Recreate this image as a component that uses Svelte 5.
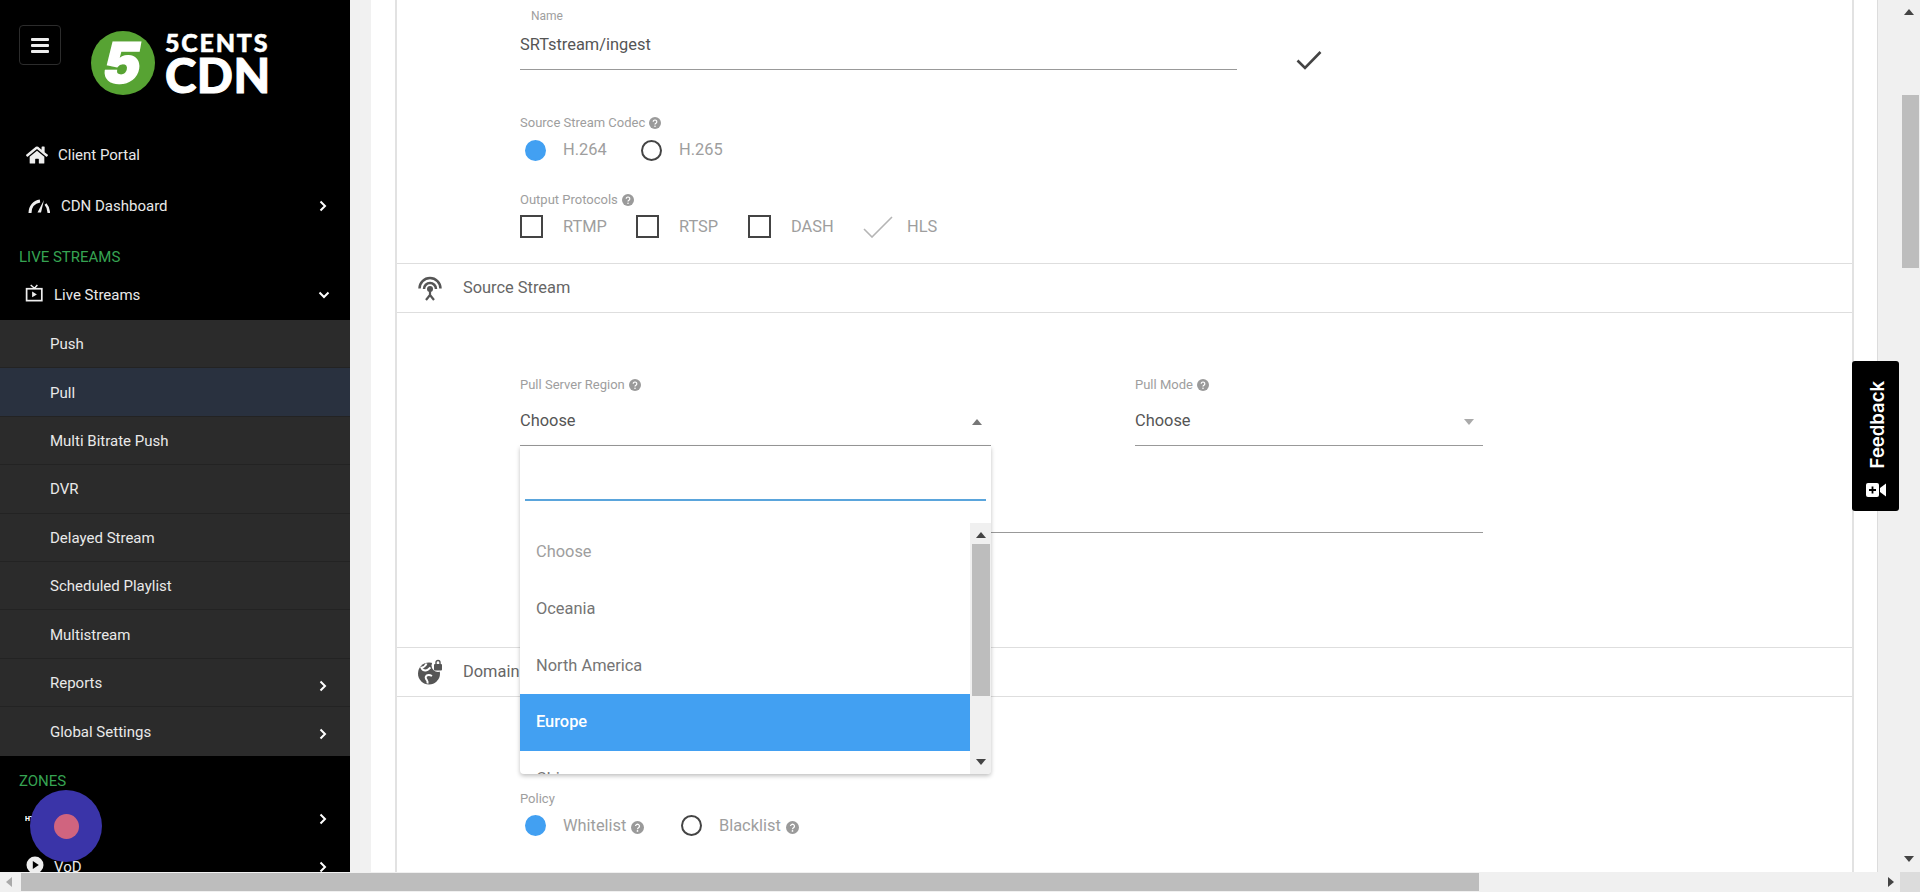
<script>
  const subItems = [
    { label: 'Push' },
    { label: 'Pull', active: true },
    { label: 'Multi Bitrate Push' },
    { label: 'DVR' },
    { label: 'Delayed Stream' },
    { label: 'Scheduled Playlist' },
    { label: 'Multistream' },
    { label: 'Reports', more: true },
    { label: 'Global Settings', more: true }
  ];

  const regions = ['Choose', 'Oceania', 'North America', 'Europe', 'China'];
  const protocols = [
    { label: 'RTMP', width: 116 },
    { label: 'RTSP', width: 112 },
    { label: 'DASH', width: 115 }
  ];
</script>

{#snippet help()}
  <svg class="help" viewBox="0 0 12 12" aria-hidden="true">
    <circle cx="6" cy="6" r="6" fill="#9a9a9a" />
    <path d="M4.2 4.7a1.8 1.7 0 1 1 2.7 1.5c-.6.4-.9.6-.9 1.3" fill="none" stroke="#fff" stroke-width="1.2" />
    <circle cx="6" cy="9.2" r=".8" fill="#fff" />
  </svg>
{/snippet}

{#snippet chevron(down = false)}
  <svg class="chevron" class:down viewBox="0 0 8 12" aria-hidden="true">
    <path d="M1.5 1.5 6 6l-4.500 4.500" fill="none" stroke="#fff" stroke-width="2" />
  </svg>
{/snippet}

<div class="page">
  <div class="top">
    <aside class="sidebar">
      <div class="brand">
        <button class="burger" aria-label="Menu">
          <span></span><span></span><span></span>
        </button>
        <div class="logo">
          <div class="logo-mark"><span>5</span></div>
          <div class="logo-text">
            <span class="logo-small">5CENTS</span>
            <span class="logo-big">CDN</span>
          </div>
        </div>
      </div>

      <nav>
        <div class="nav-row portal">
          <svg class="nav-icon" viewBox="0 0 576 512" aria-hidden="true">
            <path fill="#eee" d="M280.37 148.26L96 300.11V464a16 16 0 0 0 16 16l112.06-.29a16 16 0 0 0 15.92-16V368a16 16 0 0 1 16-16h64a16 16 0 0 1 16 16v95.64a16 16 0 0 0 16 16.05L464 480a16 16 0 0 0 16-16V300L295.67 148.26a12.19 12.19 0 0 0-15.3 0zM571.6 251.47L488 182.56V44.05a12 12 0 0 0-12-12h-56a12 12 0 0 0-12 12v72.61L318.47 43a48 48 0 0 0-61 0L4.34 251.47a12 12 0 0 0-1.6 16.9l25.5 31A12 12 0 0 0 45.15 301l235.22-193.74a12.19 12.19 0 0 1 15.3 0L530.9 301a12 12 0 0 0 16.9-1.6l25.5-31a12 12 0 0 0-1.7-17z" />
          </svg>
          <span>Client Portal</span>
        </div>
        <div class="nav-row dash">
          <svg class="nav-icon" viewBox="0 0 22 14" aria-hidden="true">
            <path d="M2 14C2 7.500 6 3 12 2" fill="none" stroke="#eee" stroke-width="3" />
            <path d="M16 1 13 13.500H9.500z" fill="#eee" />
            <path d="M17.500 5c2.200 2.500 3.300 5.500 3.300 9" fill="none" stroke="#eee" stroke-width="2.500" />
          </svg>
          <span>CDN Dashboard</span>
          {@render chevron()}
        </div>
        <div class="group-title first">LIVE STREAMS</div>
        <div class="nav-row live">
          <svg class="nav-icon tv" viewBox="0 0 20 20" aria-hidden="true">
            <path d="M6 1l4 3.500L13 1" fill="none" stroke="#eee" stroke-width="1.500" />
            <rect x="1.700" y="5" width="16" height="12.500" fill="none" stroke="#eee" stroke-width="1.800" />
            <path d="M7.500 8l5 3-5 3z" fill="#eee" />
          </svg>
          <span>Live Streams</span>
          {@render chevron(true)}
        </div>

        <ul class="sub">
          {#each subItems as item}
            <li class:active={item.active}>
              <span>{item.label}</span>
              {#if item.more}{@render chevron()}{/if}
            </li>
          {/each}
        </ul>

        <div class="group-title zones">ZONES</div>
        <div class="nav-row http">
          <span class="http-mark">HTTP</span>
          <span>HTTP</span>
          {@render chevron()}
        </div>
        <div class="nav-row vod">
          <svg class="nav-icon play" viewBox="0 0 18 18" aria-hidden="true">
            <circle cx="9" cy="9" r="8.500" fill="#eee" />
            <path d="M6.800 5l6 4-6 4z" fill="#000" />
          </svg>
          <span>VoD</span>
          {@render chevron()}
        </div>
      </nav>
      <div class="record"><i></i></div>
    </aside>

    <main class="content">
      <div class="card">
        <section class="stream-form">
          <div class="name-row">
            <div class="name-field">
              <span class="name-label">Name</span>
              <div class="name-value">SRTstream/ingest</div>
            </div>
            <svg class="confirm" viewBox="0 0 26 20" aria-hidden="true">
              <path d="M1.500 10.500 9 18 24.500 2" fill="none" stroke="#444" stroke-width="2.600" />
            </svg>
          </div>

          <div class="small-label codec-label">Source Stream Codec {@render help()}</div>
          <div class="choice-row">
            <label class="choice h264"><i class="radio on"></i>H.264</label>
            <label class="choice"><i class="radio"></i>H.265</label>
          </div>

          <div class="small-label proto-label">Output Protocols {@render help()}</div>
          <div class="choice-row protos">
            {#each protocols as p}
              <label class="choice" style="width: {p.width}px"><i class="box"></i>{p.label}</label>
            {/each}
            <label class="choice">
              <svg class="ticked" viewBox="0 0 30 22" aria-hidden="true">
                <path d="M1 13l8 8L29 1" fill="none" stroke="#b5b5b5" stroke-width="1.600" />
              </svg>HLS
            </label>
          </div>
        </section>

        <header class="section-head">
          <svg class="head-icon" viewBox="0 0 26 26" aria-hidden="true">
            <path d="M2.500 13.500a10.500 10.500 0 0 1 21 0" fill="none" stroke="#555" stroke-width="2.500" />
            <path d="M7 14a6 6 0 0 1 12 0" fill="none" stroke="#555" stroke-width="2.500" />
            <circle cx="13" cy="14" r="3" fill="#555" />
            <path d="M13 15v5M13 20l-4 5M13 20l4 5" fill="none" stroke="#555" stroke-width="2.200" />
          </svg>
          <span>Source Stream</span>
        </header>

        <section class="source-body">
          <div class="fields">
            <div class="select-field region">
              <div class="small-label">Pull Server Region {@render help()}</div>
              <div class="select-value">Choose <i class="tri up"></i></div>

              <div class="dropdown">
                <div class="search"></div>
                <div class="options">
                  <ul>
                    {#each regions as region, i}
                      <li class:muted={i === 0} class:selected={region === 'Europe'}>{region}</li>
                    {/each}
                  </ul>
                  <div class="list-scroll">
                    <i class="tri up dark"></i>
                    <b></b>
                    <i class="tri dark"></i>
                  </div>
                </div>
              </div>
            </div>
            <div class="select-field mode">
              <div class="small-label">Pull Mode {@render help()}</div>
              <div class="select-value">Choose <i class="tri pale"></i></div>
            </div>
          </div>
          <div class="blank-line"></div>
        </section>

        <header class="section-head domain">
          <svg class="head-icon" viewBox="0 0 26 26" aria-hidden="true">
            <circle cx="12" cy="14.500" r="11" fill="#555" />
            <path d="M9.500 4.500C8.800 6.500 7.500 8 4.500 8.800 5.500 11 7.500 11.800 9.500 11.300 11 11 12 9.500 13.500 8.500M15 17c-1.800-1-4-1.300-5.500-.3-1.200 1-1 2.800.3 4.300.8 1 1 2 .7 3.500" fill="none" stroke="#fff" stroke-width="2" />
            <circle cx="21" cy="6.500" r="6.500" fill="#fff" />
            <rect x="17" y="5" width="8" height="6.500" rx="1" fill="#555" />
            <path d="M19 5.500V3.500a2 2 0 0 1 4 0v2" fill="none" stroke="#555" stroke-width="1.400" />
          </svg>
          <span>Domain</span>
        </header>

        <section class="policy">
          <div class="small-label">Policy</div>
          <div class="choice-row">
            <label class="choice whitelist"><i class="radio on"></i>Whitelist {@render help()}</label>
            <label class="choice"><i class="radio"></i>Blacklist {@render help()}</label>
          </div>
        </section>
      </div>
    </main>

    <div class="v-scroll">
      <i class="tri up dark"></i>
      <b></b>
      <i class="tri dark"></i>
    </div>

    <button class="feedback">
      <span>Feedback</span>
      <svg viewBox="0 0 20 14" aria-hidden="true">
        <rect x="0" y="0" width="13" height="14" rx="2" fill="#fff" />
        <path d="M6.500 3.500v7M3 7h7" stroke="#000" stroke-width="1.800" />
        <path d="M14 5 20 0.500v13L14 9z" fill="#fff" />
      </svg>
    </button>
  </div>

  <div class="h-scroll">
    <i class="arrow left"></i>
    <b></b>
    <i class="arrow right"></i>
    <span class="corner"></span>
  </div>
</div>

<style>
  :global(body) {
    margin: 0;
    background: #fff;
    overflow: hidden;
  }

  .page {
    width: 1920px;
    height: 892px;
    display: flex;
    flex-direction: column;
    overflow: hidden;
    font-family: Roboto, "Liberation Sans", sans-serif;
  }

  .top {
    position: relative;
    flex: 1;
    min-height: 0;
    display: flex;
  }

  /* sidebar */
  .sidebar {
    position: relative;
    width: 350px;
    flex-shrink: 0;
    background: #000;
    color: #e9e9e9;
    font-size: 15px;
    overflow: hidden;
  }

  .brand {
    height: 108px;
    display: flex;
    align-items: flex-start;
    padding: 25px 0 0 19px;
    box-sizing: border-box;
  }

  .burger {
    width: 42px;
    height: 40px;
    padding: 0;
    background: #000;
    border: 1px solid #2c2c2c;
    border-radius: 4px;
    display: flex;
    flex-direction: column;
    align-items: center;
    justify-content: center;
    gap: 3px;
  }

  .burger span {
    width: 18px;
    height: 3px;
    background: #eee;
    border-radius: 1px;
  }

  .logo {
    display: flex;
    align-items: center;
    gap: 10px;
    margin-left: 30px;
    margin-top: 5px;
  }

  .logo-mark {
    width: 64px;
    height: 64px;
    border-radius: 50%;
    background: #57a333;
    display: flex;
    align-items: center;
    justify-content: center;
    color: #fff;
    font: 900 56px/1 Inter, Lato, sans-serif;
  }

  .logo-mark span {
    display: block;
    transform: skewX(-10deg);
    -webkit-text-stroke: 1.500px #fff;
  }

  .logo-text {
    display: flex;
    flex-direction: column;
    color: #fff;
    font-family: Lato, Inter, sans-serif;
    font-weight: 900;
    line-height: 1;
  }

  .logo-small {
    font-size: 25px;
    height: 25px;
    letter-spacing: 1.800px;
    -webkit-text-stroke: 0.500px #fff;
  }

  .logo-big {
    font-size: 47.500px;
    height: 40px;
    line-height: 40px;
    letter-spacing: 0.500px;
    -webkit-text-stroke: 1px #fff;
  }

  .nav-row {
    display: flex;
    align-items: center;
    position: relative;
    height: 40px;
    padding-left: 26px;
  }

  .nav-icon {
    flex-shrink: 0;
    width: 22px;
    height: 20px;
  }

  .portal {
    margin-top: 27px;
    gap: 10px;
  }

  .dash {
    margin-top: 11px;
    padding-left: 28px;
    gap: 11px;
  }

  .dash .nav-icon {
    width: 22px;
    height: 14px;
  }

  .live {
    padding-left: 25px;
    gap: 10px;
    height: 38px;
    margin: 10px 0 6px;
  }

  .tv {
    width: 19px;
    height: 19px;
    margin-top: -3px;
  }

  .chevron {
    position: absolute;
    right: 23px;
    width: 8px;
    height: 12px;
  }

  .chevron.down {
    transform: rotate(90deg);
    right: 22px;
  }

  .group-title {
    color: #36a352;
    font-size: 15px;
    padding-left: 19px;
    line-height: 18px;
  }

  .group-title.first {
    margin-top: 22px;
  }

  .group-title.zones {
    margin-top: 16px;
  }

  .sub {
    list-style: none;
    margin: 0;
    padding: 0;
    background: #2b2b2b;
  }

  .sub li {
    position: relative;
    height: 48.400px;
    box-sizing: border-box;
    display: flex;
    align-items: center;
    padding-left: 50px;
    padding-top: 1px;
    border-bottom: 1px solid #232323;
  }

  .sub li:last-child {
    border-bottom: 0;
  }

  .sub li.active {
    background: #29313f;
  }

  .sub .chevron {
    top: 21px;
  }

  .http {
    margin-top: 9px;
    padding-left: 25px;
    height: 40px;
    gap: 10px;
  }

  .http-mark {
    font-size: 7px;
    font-weight: 900;
    width: 19px;
    overflow: hidden;
    color: #fff;
  }

  .vod {
    margin-top: 8px;
    height: 40px;
    gap: 10px;
  }

  .play {
    width: 18px;
    height: 18px;
    margin-top: -4px;
  }

  .record {
    position: absolute;
    left: 30px;
    top: 790px;
    width: 72px;
    height: 72px;
    border-radius: 50%;
    background: #3a34a8;
    display: flex;
    align-items: center;
    justify-content: center;
  }

  .record i {
    width: 25px;
    height: 25px;
    border-radius: 50%;
    background: #d0647f;
  }

  /* content */
  .content {
    flex: 1;
    min-width: 0;
    background: #fff;
    border-left: 21px solid #f1f1f1;
    border-right: 1px solid #dcdcdc;
    overflow: hidden;
    padding-left: 24px;
    padding-right: 23px;
    box-sizing: border-box;
  }

  .card {
    height: 100%;
    border-left: 2px solid #e2e2e2;
    border-right: 2px solid #e2e2e2;
    box-sizing: border-box;
    color: #9e9e9e;
    font-size: 16.400px;
  }

  .stream-form {
    height: 263px;
    box-sizing: border-box;
    padding: 9px 0 0 123px;
  }

  .name-row {
    display: flex;
    align-items: flex-start;
  }

  .name-field {
    width: 717px;
    height: 60px;
    border-bottom: 1px solid #999;
  }

  .name-label {
    display: block;
    font-size: 12px;
    line-height: 14px;
    padding-left: 11px;
    color: #9e9e9e;
  }

  .name-value {
    color: #555;
    font-size: 16.400px;
    line-height: 20px;
    margin-top: 12px;
  }

  .confirm {
    width: 26px;
    height: 20px;
    margin: 41px 0 0 59px;
  }

  .small-label {
    display: flex;
    align-items: center;
    gap: 4px;
    font-size: 13px;
    line-height: 16px;
    color: #9e9e9e;
  }

  .codec-label {
    margin-top: 45px;
  }

  .proto-label {
    margin-top: 30px;
  }

  .help {
    width: 12px;
    height: 12px;
    flex-shrink: 0;
  }

  .choice-row {
    display: flex;
    align-items: center;
    height: 24px;
    margin-top: 7px;
  }

  .choice {
    display: flex;
    align-items: center;
    color: #9e9e9e;
    font-size: 16.400px;
    line-height: 20px;
    white-space: nowrap;
  }

  .radio {
    width: 21px;
    height: 21px;
    margin: 0 17px 0 5px;
    box-sizing: border-box;
    border: 2px solid #444;
    border-radius: 50%;
    flex-shrink: 0;
  }

  .radio.on {
    background: #42a0f2;
    border-color: #42a0f2;
  }

  .h264 {
    width: 116px;
  }

  .protos {
    margin-top: 6.500px;
  }

  .box {
    width: 23px;
    height: 23px;
    box-sizing: border-box;
    border: 2px solid #444;
    margin-right: 20px;
    flex-shrink: 0;
  }

  .ticked {
    width: 30px;
    height: 22px;
    margin-right: 14px;
  }

  .section-head {
    height: 50px;
    box-sizing: border-box;
    border-top: 1px solid #dedede;
    border-bottom: 1px solid #dedede;
    display: flex;
    align-items: center;
    gap: 20px;
    padding-left: 20px;
    color: #666;
    font-size: 16.400px;
  }

  .section-head span {
    padding-bottom: 2px;
  }

  .head-icon {
    width: 26px;
    height: 26px;
    flex-shrink: 0;
  }

  .source-body {
    height: 334px;
    box-sizing: border-box;
    padding: 64px 0 0 123px;
  }

  .fields {
    display: flex;
    gap: 144px;
  }

  .select-field {
    position: relative;
  }

  .region {
    width: 471px;
  }

  .mode {
    width: 348px;
  }

  .select-value {
    position: relative;
    height: 52px;
    box-sizing: border-box;
    padding-top: 17px;
    margin-top: 1px;
    line-height: 20px;
    color: #555;
    border-bottom: 1px solid #999;
  }

  .tri {
    display: block;
    width: 0;
    height: 0;
    border-left: 5px solid transparent;
    border-right: 5px solid transparent;
    border-top: 6px solid #777;
  }

  .tri.up {
    border-top: 0;
    border-bottom: 6px solid #777;
  }

  .tri.dark {
    border-top-color: #444;
    border-bottom-color: #444;
  }

  .tri.pale {
    border-top-color: #aaa;
  }

  .select-value .tri {
    position: absolute;
    right: 9px;
    top: 25px;
  }

  .blank-line {
    width: 963px;
    height: 1px;
    background: #999;
    margin-top: 86px;
  }

  .dropdown {
    position: absolute;
    z-index: 5;
    left: 0;
    top: 69px;
    width: 471px;
    height: 328px;
    background: #fff;
    border-radius: 0 0 4px 4px;
    box-shadow: 0 2px 4px rgba(0, 0, 0, 0.25);
    overflow: hidden;
  }

  .search {
    height: 55px;
    margin: 0 5px;
    box-sizing: border-box;
    border-bottom: 2px solid #5aa5dc;
  }

  .options {
    display: flex;
    height: 251px;
    margin-top: 22px;
    overflow: hidden;
  }

  .options ul {
    list-style: none;
    margin: 0;
    padding: 0;
    width: 450px;
    flex-shrink: 0;
  }

  .options li {
    height: 57px;
    box-sizing: border-box;
    padding-left: 16px;
    display: flex;
    align-items: center;
    color: #757575;
  }

  .options li.muted {
    color: #9e9e9e;
  }

  .options li.selected {
    background: #42a0f2;
    color: #fff;
    font-weight: 500;
    padding-bottom: 3px;
  }

  .options li:last-child {
    padding-bottom: 3px;
  }

  .list-scroll {
    width: 21px;
    background: #f0f0f0;
    display: flex;
    flex-direction: column;
    align-items: flex-start;
    padding-left: 2px;
    box-sizing: border-box;
  }

  .list-scroll .tri {
    margin: 9px 0 6px 4px;
  }

  .list-scroll b {
    display: block;
    width: 18px;
    height: 152px;
    background: #bdbdbd;
  }

  .list-scroll .tri:last-child {
    margin: auto 0 9px 4px;
  }

  .policy {
    padding: 94px 0 0 123px;
  }

  .policy .choice-row {
    margin-top: 6.500px;
  }

  .whitelist {
    width: 156px;
  }

  .policy .help {
    width: 13px;
    height: 13px;
    margin: 3px 0 0 5px;
  }

  .feedback {
    position: absolute;
    z-index: 6;
    right: 21px;
    top: 361px;
    width: 47px;
    height: 150px;
    padding: 0;
    border: 0;
    border-radius: 3px;
    background: #000;
    color: #fff;
    display: flex;
    flex-direction: column;
    align-items: center;
  }

  .feedback span {
    writing-mode: vertical-rl;
    transform: rotate(180deg);
    margin: 20px 0 0 4px;
    font: 600 18.500px/1 Inter, sans-serif;
  }

  .feedback svg {
    width: 20px;
    height: 14px;
    margin-top: 15px;
  }

  /* page scrollbars */
  .v-scroll {
    width: 42px;
    flex-shrink: 0;
    background: #f0f0f0;
    display: flex;
    flex-direction: column;
    align-items: flex-end;
    box-sizing: border-box;
    padding-right: 6px;
  }

  .v-scroll .tri {
    margin-top: 9px;
  }

  .v-scroll b {
    display: block;
    width: 17px;
    height: 173px;
    margin: 80px -5px 0 0;
    background: #bdbdbd;
  }

  .v-scroll .tri:last-child {
    margin: auto 0 10px;
  }

  .h-scroll {
    position: relative;
    height: 20px;
    background: #f0f0f0;
    flex-shrink: 0;
    display: flex;
    align-items: center;
  }

  .h-scroll b {
    display: block;
    height: 18px;
    width: 1458px;
    margin-left: 9px;
    background: #bdbdbd;
  }

  .arrow {
    display: block;
    width: 0;
    height: 0;
    border-top: 5px solid transparent;
    border-bottom: 5px solid transparent;
  }

  .arrow.left {
    margin-left: 6px;
    border-right: 6px solid #aaa;
  }

  .arrow.right {
    margin-left: auto;
    margin-right: 26px;
    border-left: 6px solid #444;
  }

  .corner {
    position: absolute;
    right: 0;
    top: 0;
    width: 20px;
    height: 20px;
    background: #dcdcdc;
  }
</style>
